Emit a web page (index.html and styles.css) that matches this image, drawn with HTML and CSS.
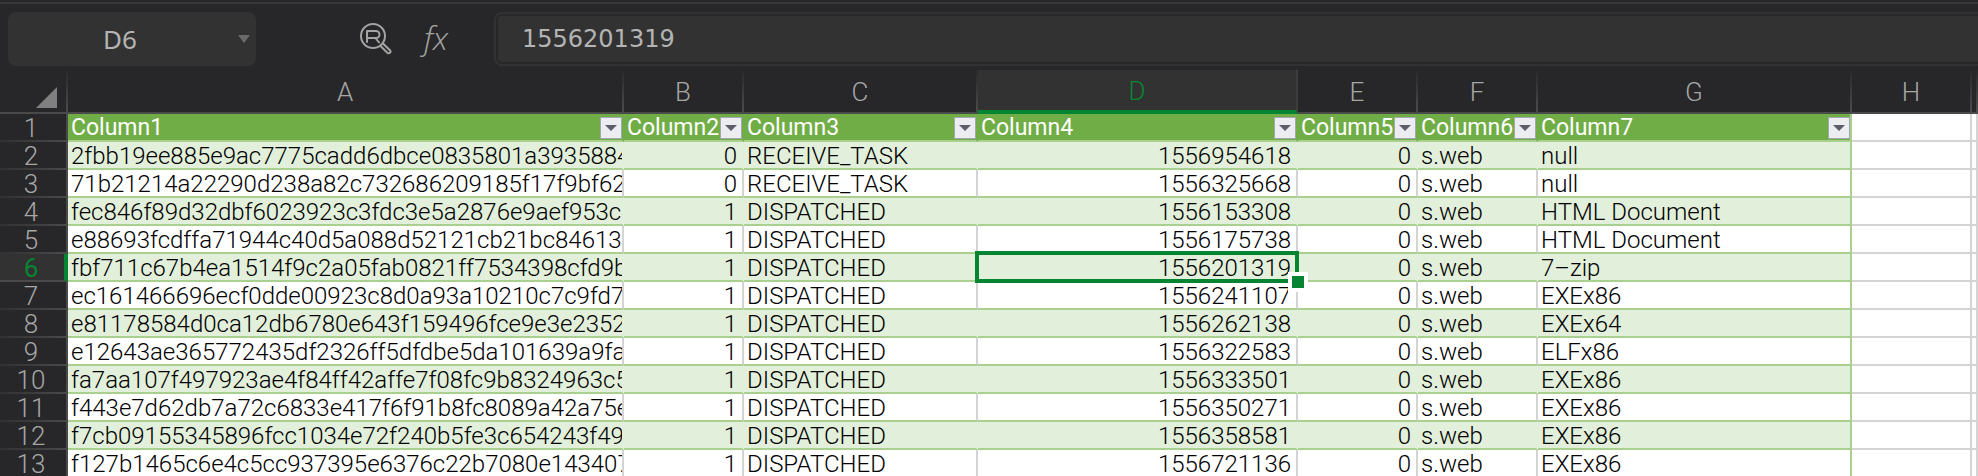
FILE: index.html
```html
<!DOCTYPE html>
<html lang="en">
<head>
<meta charset="utf-8">
<title>Spreadsheet</title>
<link rel="stylesheet" href="styles.css">
</head>
<body>
<header class="toolbar">
  <div class="name-box">
    <input class="name-input" type="text" value="D6" aria-label="Name box">
    <button class="name-arrow" type="button" aria-label="Choose a name">
      <svg width="12" height="8" viewBox="0 0 12 8"><path d="M0 0h12L6 8z" fill="#6a6a6a"/></svg>
    </button>
  </div>
  <div class="tools">
    <button class="tool" type="button" aria-label="Find reference">
      <svg width="36" height="36" viewBox="0 0 36 36" fill="none" stroke="#a3a3a3" stroke-width="2" stroke-linecap="round" stroke-linejoin="round">
        <circle cx="15" cy="15" r="12"/>
        <path d="M9 21V10h9a3.500 3.500 0 0 1 0 7h-7.500M17.500 17l3.500 4.500"/>
        <path d="M23 25.500l6.300 6.300a1.800 1.800 0 0 0 2.600-2.600L25.500 23"/>
      </svg>
    </button>
    <button class="tool fx" type="button" aria-label="Insert function">fx</button>
  </div>
  <div class="formula"><input class="formula-input" type="text" value="1556201319" aria-label="Formula bar"></div>
</header>
<table class="sheet">
  <colgroup>
    <col class="w-num"><col class="w-a"><col class="w-s"><col class="w-c"><col class="w-d"><col class="w-s"><col class="w-s"><col class="w-g"><col class="w-s"><col>
  </colgroup>
  <thead>
    <tr class="letters">
      <th class="corner"><svg width="21" height="21" viewBox="0 0 21 21"><path d="M21 0v21H0z" fill="#808080"/></svg></th>
      <th>A</th><th>B</th><th>C</th><th class="current">D</th><th>E</th><th>F</th><th>G</th><th>H</th><th></th>
    </tr>
  </thead>
  <tbody>
    <tr class="titles">
      <th>1</th>
      <td><div class="title">Column1<button class="filter" type="button" aria-label="Filter Column1"></button></div></td>
      <td><div class="title">Column2<button class="filter" type="button" aria-label="Filter Column2"></button></div></td>
      <td><div class="title">Column3<button class="filter" type="button" aria-label="Filter Column3"></button></div></td>
      <td><div class="title">Column4<button class="filter" type="button" aria-label="Filter Column4"></button></div></td>
      <td><div class="title">Column5<button class="filter" type="button" aria-label="Filter Column5"></button></div></td>
      <td><div class="title">Column6<button class="filter" type="button" aria-label="Filter Column6"></button></div></td>
      <td class="last"><div class="title">Column7<button class="filter" type="button" aria-label="Filter Column7"></button></div></td>
      <td class="out"></td><td class="out"></td>
    </tr>
    <tr class="band"><th>2</th><td>2fbb19ee885e9ac7775cadd6dbce0835801a39358842</td><td class="n">0</td><td>RECEIVE_TASK</td><td class="n">1556954618</td><td class="n">0</td><td>s.web</td><td class="last">null</td><td class="out"></td><td class="out"></td></tr>
    <tr><th>3</th><td>71b21214a22290d238a82c732686209185f17f9bf62</td><td class="n">0</td><td>RECEIVE_TASK</td><td class="n">1556325668</td><td class="n">0</td><td>s.web</td><td class="last">null</td><td class="out"></td><td class="out"></td></tr>
    <tr class="band"><th>4</th><td>fec846f89d32dbf6023923c3fdc3e5a2876e9aef953ca</td><td class="n">1</td><td>DISPATCHED</td><td class="n">1556153308</td><td class="n">0</td><td>s.web</td><td class="last">HTML Document</td><td class="out"></td><td class="out"></td></tr>
    <tr><th>5</th><td>e88693fcdffa71944c40d5a088d52121cb21bc846137</td><td class="n">1</td><td>DISPATCHED</td><td class="n">1556175738</td><td class="n">0</td><td>s.web</td><td class="last">HTML Document</td><td class="out"></td><td class="out"></td></tr>
    <tr class="band"><th class="current">6</th><td>fbf711c67b4ea1514f9c2a05fab0821ff7534398cfd9b9</td><td class="n">1</td><td>DISPATCHED</td><td class="n selected">1556201319</td><td class="n">0</td><td>s.web</td><td class="last">7–zip</td><td class="out"></td><td class="out"></td></tr>
    <tr><th>7</th><td>ec161466696ecf0dde00923c8d0a93a10210c7c9fd7</td><td class="n">1</td><td>DISPATCHED</td><td class="n">1556241107</td><td class="n">0</td><td>s.web</td><td class="last">EXEx86</td><td class="out"></td><td class="out"></td></tr>
    <tr class="band"><th>8</th><td>e81178584d0ca12db6780e643f159496fce9e3e2352</td><td class="n">1</td><td>DISPATCHED</td><td class="n">1556262138</td><td class="n">0</td><td>s.web</td><td class="last">EXEx64</td><td class="out"></td><td class="out"></td></tr>
    <tr><th>9</th><td>e12643ae365772435df2326ff5dfdbe5da101639a9fa3</td><td class="n">1</td><td>DISPATCHED</td><td class="n">1556322583</td><td class="n">0</td><td>s.web</td><td class="last">ELFx86</td><td class="out"></td><td class="out"></td></tr>
    <tr class="band"><th>10</th><td>fa7aa107f497923ae4f84ff42affe7f08fc9b8324963c5</td><td class="n">1</td><td>DISPATCHED</td><td class="n">1556333501</td><td class="n">0</td><td>s.web</td><td class="last">EXEx86</td><td class="out"></td><td class="out"></td></tr>
    <tr><th>11</th><td>f443e7d62db7a72c6833e417f6f91b8fc8089a42a75e</td><td class="n">1</td><td>DISPATCHED</td><td class="n">1556350271</td><td class="n">0</td><td>s.web</td><td class="last">EXEx86</td><td class="out"></td><td class="out"></td></tr>
    <tr class="band"><th>12</th><td>f7cb09155345896fcc1034e72f240b5fe3c654243f49</td><td class="n">1</td><td>DISPATCHED</td><td class="n">1556358581</td><td class="n">0</td><td>s.web</td><td class="last">EXEx86</td><td class="out"></td><td class="out"></td></tr>
    <tr><th>13</th><td>f127b1465c6e4c5cc937395e6376c22b7080e143407</td><td class="n">1</td><td>DISPATCHED</td><td class="n">1556721136</td><td class="n">0</td><td>s.web</td><td class="last">EXEx86</td><td class="out"></td><td class="out"></td></tr>
  </tbody>
</table>
</body>
</html>
```

FILE: styles.css
```css
*, *::before, *::after { box-sizing: border-box; }

html { overflow: hidden; background: #272729; }

body { margin: 0; font-family: Roboto, "Noto Sans", sans-serif; }

button, input {
  margin: 0;
  padding: 0;
  border: 0;
  background: none;
  color: inherit;
  font: inherit;
}

/* Toolbar */
.toolbar {
  display: flex;
  align-items: stretch;
  margin-top: 2px;
  padding: 8px 0 4px 8px;
  border-top: 2px solid #38383a;
  color: #b4b4b4;
}

.name-box {
  display: flex;
  width: 248px;
  height: 54px;
  border-radius: 8px;
  background: #323232;
}

.name-input {
  flex: 1;
  min-width: 0;
  text-align: center;
  font: 26px "Noto Sans", sans-serif;
}

.name-arrow {
  display: flex;
  align-items: center;
  justify-content: center;
  width: 24px;
}

.tools {
  display: flex;
  align-items: center;
  gap: 30px;
  width: 238px;
  padding-left: 102px;
}

.tool { display: flex; color: #a3a3a3; }

.fx { padding-bottom: 2px; font: italic 300 32px/36px "Open Sans", "Noto Sans", sans-serif; }

.formula {
  flex: 1;
  display: flex;
  padding: 2px 0 2px 2px;
  border: 2px solid #323232;
  border-right: 0;
  border-radius: 8px 0 0 8px;
}

.formula-input {
  flex: 1;
  min-width: 0;
  padding: 0 24px;
  border-radius: 4px 0 0 4px;
  background: #323232;
  font: 24px "DejaVu Sans", sans-serif;
}

/* Grid */
.sheet {
  width: 100%;
  table-layout: fixed;
  border-collapse: separate;
  border-spacing: 0;
  background: #fff;
  color: #000;
  font-size: 24px;
  font-weight: 300;
  line-height: 24px;
}

.w-num { width: 68px; }
.w-a { width: 556px; }
.w-s { width: 120px; }
.w-c { width: 234px; }
.w-d { width: 320px; }
.w-g { width: 314px; }

.sheet th, .sheet td { padding: 2px 0 0; border: 0 solid; border-width: 0 2px 2px 0; }

.sheet th {
  border-color: #4a4a4b;
  background: #272729;
  color: #a6a6a6;
  font-size: 26px;
  font-weight: 300;
}

.sheet .letters th {
  height: 44px;
  border-image: linear-gradient(#272729, #4a4a4b 90%) 2;
}

.sheet .letters .current {
  border-image: none;
  border-bottom: 4px solid #058531;
  border-right-color: #3c3c3c;
}

.sheet tbody th {
  padding-right: 4px;
  border-image: linear-gradient(90deg, #303032, #4a4a4b) 2;
}

.sheet .current { background: #323232; color: #058531; }

.sheet tbody .current { border-image: none; border-right: 4px solid #058531; padding-right: 2px; font-weight: 400; }

.sheet .corner { padding: 12px 9px 0 0; }

.corner svg { display: block; margin-left: auto; }

.sheet td {
  padding: 2px 0 0 3px;
  overflow: hidden;
  white-space: nowrap;
  border-color: #d4d4d4;
  border-bottom-color: #a9d08e;
}

.sheet .n { padding: 2px 5px 0 0; text-align: right; }

.sheet .band td { background: #e2efda; border-right-color: #e2efda; }

.sheet .titles td {
  background: #70ad47;
  border-right-color: #70ad47;
  color: #fff;
  font-size: 23px;
  font-weight: 400;
}

.sheet tr .last { border-right-color: #a9d08e; }

.sheet tr .out, .sheet .titles .out { background: #fff; border-color: #d4d4d4; }

.title { display: flex; align-items: center; justify-content: space-between; height: 24px; }

.filter {
  display: flex;
  align-items: center;
  justify-content: center;
  flex: none;
  width: 22px;
  height: 22px;
  border: 1px solid #a5a6b0;
  background: #ecedf0;
}

.filter::after {
  content: "";
  border: 6px solid transparent;
  border-top-color: #5b5d68;
  border-bottom: 0;
}

/* Selection frame and fill handle */
.sheet .selected { position: relative; overflow: visible; }

.selected::before {
  content: "";
  position: absolute;
  inset: -3px;
  border: 4px solid #058531;
}

.selected::after {
  content: "";
  position: absolute;
  right: -12px;
  bottom: -12px;
  width: 20px;
  height: 20px;
  border: 4px solid #fff;
  background: #058531;
}
```
